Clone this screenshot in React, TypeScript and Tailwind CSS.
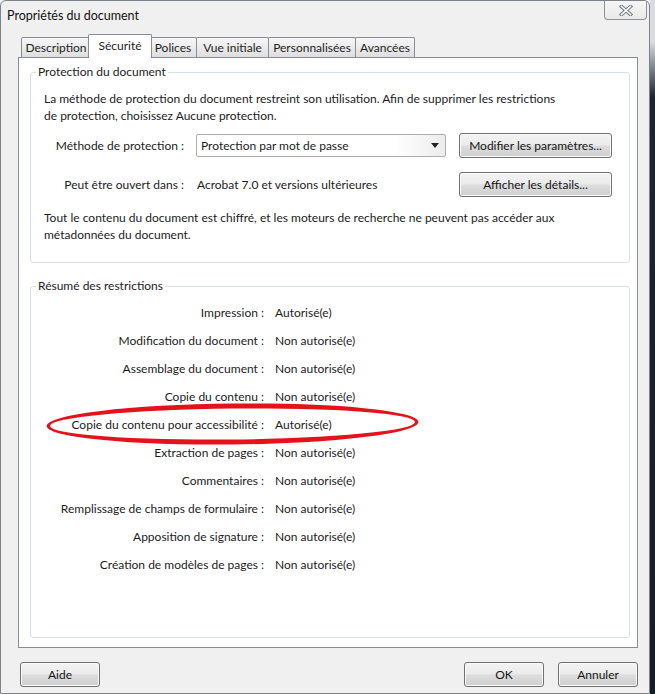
import React from "react";

function Btn({ children, className = "" }: { children: React.ReactNode; className?: string }) {
  return (
    <div
      className={`h-[25px] flex items-center justify-center rounded-[3px] border border-[#707070] bg-[linear-gradient(to_bottom,#f3f3f3_0%,#ebebeb_48%,#dddddd_52%,#cfcfcf_100%)] shadow-[inset_0_0_0_1px_#fbfbfb] text-[#151515] ${className}`}
    >
      {children}
    </div>
  );
}

const rows: { label: string; value: string }[] = [
  { label: "Impression :", value: "Autorisé(e)" },
  { label: "Modification du document :", value: "Non autorisé(e)" },
  { label: "Assemblage du document :", value: "Non autorisé(e)" },
  { label: "Copie du contenu :", value: "Non autorisé(e)" },
  { label: "Copie du contenu pour accessibilité :", value: "Autorisé(e)" },
  { label: "Extraction de pages :", value: "Non autorisé(e)" },
  { label: "Commentaires :", value: "Non autorisé(e)" },
  { label: "Remplissage de champs de formulaire :", value: "Non autorisé(e)" },
  { label: "Apposition de signature :", value: "Non autorisé(e)" },
  { label: "Création de modèles de pages :", value: "Non autorisé(e)" },
];

const tabBase =
  "-ml-px h-[20px] mb-px flex items-center justify-center border border-b-0 border-[#898c95] rounded-t-[2px] bg-[linear-gradient(to_bottom,#f7f7f7_0%,#ebebeb_50%,#dedede_100%)] text-[#1e1e1e]";

export default function App() {
  return (
    <div className="relative w-[655px] h-[694px] flex overflow-hidden bg-[#f0f0f0] font-['Lato','Liberation_Sans',sans-serif] text-[12px] leading-[16px] text-[#1c1c1c]">
      {/* window */}
      <div className="w-[650px] h-[694px] flex flex-col bg-[#f0f0f0] border-l border-t border-b border-r border-[#7d8288] rounded-tl-[6px] rounded-tr-[6px]">
        {/* title bar */}
        <div className="h-[33px] flex items-start">
          <span className="pl-[6px] pt-[7px] text-[12.5px] text-[#111]">Propriétés du document</span>
          <div className="ml-auto mr-[2px] w-[43px] h-[19px] flex items-center justify-center border border-t-0 border-[#8c929a] rounded-b-[4px] bg-[linear-gradient(to_bottom,#f6f6f6_0%,#e9e9e9_100%)]">
            <svg width="14" height="11" viewBox="0 0 14 11">
              <path d="M2.5 1.5 L11.5 9.5 M11.5 1.5 L2.5 9.5" stroke="#6f7985" strokeWidth="3.6" strokeLinecap="square" fill="none" />
              <path d="M2.5 1.5 L11.5 9.5 M11.5 1.5 L2.5 9.5" stroke="#ffffff" strokeWidth="1.6" strokeLinecap="square" fill="none" />
            </svg>
          </div>
        </div>

        {/* tabs */}
        <div className="relative z-10 ml-[17px] -mb-px h-[24px] flex items-end pl-[3px]">
          <div className={`${tabBase} w-[70px] ml-0`}>Description</div>
          <div className="relative z-10 -ml-[3px] -mr-[2px] w-[64px] h-[24px] flex items-start justify-center pt-[3px] border border-b-0 border-[#898c95] rounded-t-[2px] bg-white text-[#1e1e1e]">
            Sécurité
          </div>
          <div className={`${tabBase} w-[48px]`}>Polices</div>
          <div className={`${tabBase} w-[73px]`}>Vue initiale</div>
          <div className={`${tabBase} w-[88px]`}>Personnalisées</div>
          <div className={`${tabBase} w-[60px]`}>Avancées</div>
        </div>

        {/* panel */}
        <div className="ml-[17px] w-[620px] h-[591px] border border-[#898c95] bg-white pl-[11px] flex flex-col">
          {/* group 1 */}
          <fieldset className="mt-[6px] w-[600px] h-[199px] border border-[#d5dfe5] rounded-[3px] p-0 m-0">
            <legend className="ml-[5px] px-[2px] leading-[16px] text-[#1c1c1c]">Protection du document</legend>
            <div className="pl-[13px] pt-[10px]">
              <div className="leading-[17px] whitespace-nowrap">
                <div>La méthode de protection du document restreint son utilisation. Afin de supprimer les restrictions</div>
                <div>de protection, choisissez Aucune protection.</div>
              </div>
              <div className="mt-[9px] h-[25px] flex items-center">
                <div className="w-[140px] text-right">Méthode de protection :</div>
                <div className="ml-[12px] w-[250px] h-[23px] flex items-center border border-[#abadb3] rounded-[2px] bg-[linear-gradient(to_right,#ffffff_0%,#ffffff_80%,#ececec_100%)]">
                  <span className="pl-[4px] flex-1">Protection par mot de passe</span>
                  <div className="w-[20px] h-full flex items-center justify-center">
                    <svg width="8" height="5" viewBox="0 0 8 5">
                      <path d="M0 0 H8 L4 5 Z" fill="#222" />
                    </svg>
                  </div>
                </div>
                <Btn className="ml-[13px] w-[153px]">Modifier les paramètres...</Btn>
              </div>
              <div className="mt-[14px] h-[25px] flex items-center">
                <div className="w-[140px] text-right">Peut être ouvert dans :</div>
                <div className="ml-[13px] w-[249px]">Acrobat 7.0 et versions ultérieures</div>
                <Btn className="ml-[13px] w-[153px]">Afficher les détails...</Btn>
              </div>
              <div className="mt-[12px] leading-[17px] whitespace-nowrap">
                <div>Tout le contenu du document est chiffré, et les moteurs de recherche ne peuvent pas accéder aux</div>
                <div>métadonnées du document.</div>
              </div>
            </div>
          </fieldset>

          {/* group 2 */}
          <fieldset className="mt-[15px] w-[600px] h-[360px] border border-[#d5dfe5] rounded-[3px] p-0 m-0">
            <legend className="ml-[5px] px-[2px] leading-[16px] text-[#1c1c1c]">Résumé des restrictions</legend>
            <div className="pt-[5px]">
              {rows.map((r) => (
                <div key={r.label} className="h-[28px] flex items-center">
                  <div className="w-[233px] text-right whitespace-nowrap">{r.label}</div>
                  <div className="ml-[11px] whitespace-nowrap">{r.value}</div>
                </div>
              ))}
            </div>
          </fieldset>
        </div>

        {/* bottom buttons */}
        <div className="mt-[14px] ml-[19px] w-[618px] flex items-center">
          <Btn className="w-[80px]">Aide</Btn>
          <Btn className="ml-auto w-[80px]">OK</Btn>
          <Btn className="ml-[14px] w-[80px]">Annuler</Btn>
        </div>
      </div>

      {/* desktop edge */}
      <div className="w-[5px] h-[694px] bg-[linear-gradient(to_bottom,#d8dbe0_0%,#d8dbe0_6%,#1b2532_14%,#141c27_100%)]" />

      {/* red hand-drawn ellipse */}
      <svg className="absolute left-0 top-0 pointer-events-none" width="655" height="694" viewBox="0 0 655 694">
        <path
          fillRule="evenodd"
          fill="#e3121b"
          transform="rotate(-0.6 232.5 424)"
          d="M46.5,424 a186,20.5 0 1,0 372,0 a186,20.5 0 1,0 -372,0 Z M50,424 a182.5,15.5 0 1,0 365,0 a182.5,15.5 0 1,0 -365,0 Z"
        />
      </svg>
    </div>
  );
}
